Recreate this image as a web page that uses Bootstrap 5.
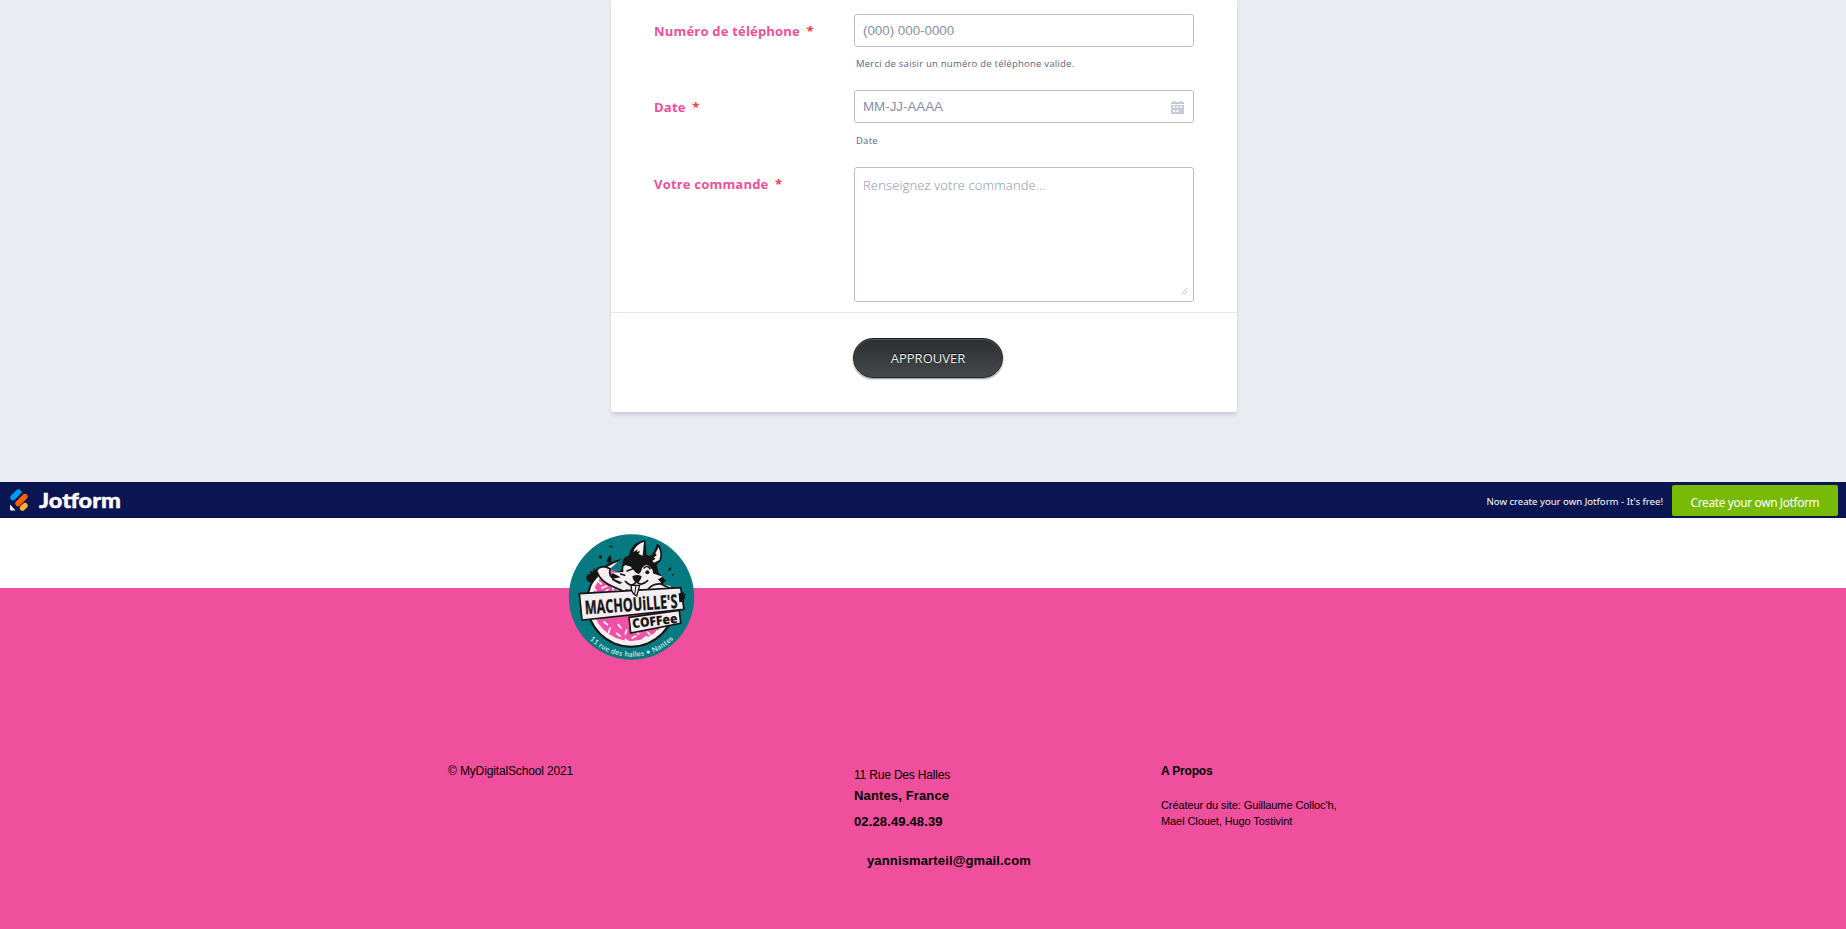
<!DOCTYPE html>
<html lang="fr">
<head>
<meta charset="utf-8">
<meta name="viewport" content="width=device-width, initial-scale=1">
<title>Machouille's Coffee</title>
<link href="https://cdn.jsdelivr.net/npm/bootstrap@5.3.0/dist/css/bootstrap.min.css" rel="stylesheet">
<style>
body{font-family:"Liberation Sans",Arial,sans-serif;color:#000;overflow:hidden}
.form-zone{background:#ebecf1;height:482px;padding-left:2px;font-family:"Open Sans",sans-serif}
.form-box{width:626px;height:412px;background:#fff;border-radius:0 0 3px 3px;box-shadow:0 4px 4px -1px #c8cbda,0 0 2px #d5d8e6}
.form-body{height:312px;padding:14px 43px 0}
.line-a{height:76px}.line-b{height:77px}
.form-title{width:200px;padding-top:8px;font-size:13px;line-height:18px;font-weight:700;letter-spacing:.2px;color:#ee4f9b;white-space:nowrap}
.form-title i{font-style:normal;color:#f23a3c;margin-left:3px}
.field{width:340px}
.field .form-control{border:1px solid #b8bdc9;border-radius:3px;font:13.33px/17px "Liberation Sans",Arial,sans-serif;padding:7px 8px;height:33px;min-height:0}
.field .form-control::placeholder{color:#8490a8;opacity:1}
.field textarea.form-control{height:135px;font:300 13px/18px "Open Sans",sans-serif;letter-spacing:.14px;padding-top:8px;resize:none}
.hint{font-size:9.5px;line-height:12px;letter-spacing:.23px;color:#57647e;margin:11px 0 0 2px}
.line-b .hint{margin-top:12px}
.over-cal{right:10px;top:11px}
.over-grip{right:6px;bottom:7px}
.form-foot{border-top:1px solid #e4e5ee;padding:25px 0 0 242px}
.send{width:150px;height:40px;border:1px solid #1f2224;border-radius:20px;background:linear-gradient(#2b2f31,#45494c);box-shadow:inset 0 1px 0 #515557,0 1px 2px #0007;color:#f0f0f0;font-size:13px;text-shadow:0 -1px 0 #000;padding:2px 0 0}
.jot{background:#0a1551;height:36px;padding:0 8px 0 9px;font-family:"Noto Sans",sans-serif}
.jot-text{font-size:9.6px;color:#fff;padding-top:5px}
.jot .btn{width:166px;height:31px;margin-left:9px;background:#78bb07;color:#fff;border:0;border-radius:2px;font-size:11.9px;letter-spacing:-.36px;padding:3px 0 0;line-height:18px}
.logo-zone{height:70px;background:#fff}
.foot{display:flow-root;height:341px;background:#ef4f9c;padding-left:448px}
.seal{margin:-54px 0 0 120px;display:block}
.foot-cols{padding-top:103px}
.foot p{margin:0;white-space:nowrap}
.c1{width:406px;font-size:12px;line-height:14px;letter-spacing:-.14px}
.c2{width:307px}.c3{width:200px}
.f11{font-size:12px;line-height:14px;letter-spacing:-.18px}
.f13{font-size:13px;line-height:15px;font-weight:700;letter-spacing:.14px}
.credit{font-size:11px;line-height:16px;margin-top:19px!important;letter-spacing:-.09px}
</style>
</head>
<body>
<main class="form-zone d-flex justify-content-center">
<form class="form-box">
<div class="form-body">
<div class="d-flex line-a"><label class="form-title">Numéro de téléphone <i>*</i></label><div class="field"><input class="form-control" placeholder="(000) 000-0000"><div class="hint">Merci de saisir un numéro de téléphone valide.</div></div></div>
<div class="d-flex line-b"><label class="form-title">Date <i>*</i></label><div class="field"><div class="position-relative"><input class="form-control" placeholder="MM-JJ-AAAA"><svg class="position-absolute over-cal" width="13" height="13" viewBox="0 0 13 13"><path fill="#c4c9db" fill-rule="evenodd" d="M0 1h2V0h2v1h5V0h2v1h2v2H0zM0 4h13v9H0zM2 5v2h2V5zm3.500 0v2h2V5zM9 5v2h2V5zM2 9v2h2V9zm3.500 0v2h2V9z"/></svg></div><div class="hint">Date</div></div></div>
<div class="d-flex"><label class="form-title">Votre commande <i>*</i></label><div class="field position-relative"><textarea class="form-control" placeholder="Renseignez votre commande..."></textarea><svg class="position-absolute over-grip" width="7" height="7" viewBox="0 0 7 7"><path stroke="#a9adba" stroke-width=".8" d="M.5 6.5l5-6M3.500 6.500l3-3.500"/></svg></div></div>
</div>
<div class="form-foot"><button type="button" class="send d-flex align-items-center justify-content-center">APPROUVER</button></div>
</form>
</main>
<nav class="jot d-flex align-items-center justify-content-between">
<svg width="114" height="28" viewBox="0 0 114 28"><g stroke-width="5.400" stroke-linecap="round"><path stroke="#0099ff" d="M4 11.500L9.500 6"/><path stroke="#ff6100" d="M9 17.500L16 10.500"/><path stroke="#ffb629" d="M13.500 22L16 19.500"/></g><path fill="#fff" d="M1 18.500v5q0 1 1 1h4.500z"/><text x="30" y="22" font-family="Lato" font-weight="900" font-size="21.500" fill="#fff" stroke="#fff" stroke-width=".4" textLength="82" lengthAdjust="spacingAndGlyphs">Jotform</text></svg>
<div class="d-flex align-items-center"><span class="jot-text">Now create your own Jotform - It's free!</span><button class="btn">Create your own Jotform</button></div>
</nav>
<div class="logo-zone"></div>
<footer class="foot">
<svg class="seal position-relative" width="127" height="127" viewBox="24 30 381 381">
<defs><path id="arc" d="M88 346A179 179 0 0 0 360 323"/></defs>
<circle cx="214.500" cy="219" r="188" fill="#067a80"/>
<!-- donut -->
<circle cx="213" cy="236" r="135" fill="#151515"/><circle cx="213" cy="236" r="129" fill="#f4eef0"/><circle cx="213" cy="234" r="117" fill="#f052a5"/>
<path stroke="#fff" stroke-width="5" stroke-linecap="round" d="M112 170l12 10M140 186l-14 6M132 205l12-8M108 200l-8-8M158 190l4 12M170 200l14-6M124 148l-4 12M132 294l10 8M150 312l-4 14M175 302l8 10M170 328l10 8M200 318l-4 12M216 342l12-6M236 330l-8-8M250 344l10-6M262 324l8 8M286 330l6-10M300 318l8-5M196 346l6 4"/>
<path fill="#067a80" d="M150 134L185 104 220 60 305 60 330 130 352 200 330 186 180 150Z"/>
<!-- left arm and paw -->
<path fill="#151515" d="M82 150l8 2 0-12 8 4 3-11 10 4 4 20-17 20-14-4-6-10z"/>
<path fill="#f4eef0" stroke="#151515" stroke-width="5" d="M110 142Q112 128 135 128L150 134Q144 158 164 164L208 176 196 204 160 188Q122 174 110 142Z"/>
<!-- head and ears -->
<path fill="#151515" d="M188 118Q186 100 206 95Q212 68 228 58Q242 50 256 47L260 92 270 96Q284 86 290 60L298 62Q312 88 302 112Q296 118 290 122L296 146 318 170 296 192H200L156 168 154 150 182 140Z"/>
<path fill="#f4eef0" d="M252 53l-4 42-12-5 4-9-10 3 3-8-13 8q6-22 32-31zM296 70q9 22 2 38l-16 8-5-6 10-6-6-3 9-8-4-5z"/>
<path fill="#f4eef0" d="M190 128Q202 114 217 132Q226 148 236 150Q244 146 246 132Q260 114 272 132Q282 140 278 148L308 158 294 166 304 178 278 186 264 196H192L178 180 188 176 160 164 182 160 156 146 190 144Z"/>
<path fill="none" stroke="#151515" stroke-width="5" stroke-linecap="round" d="M200 122q18 2 19 12l-18 7M252 132q10-10 18 2M196 172q22 22 33 0q12 18 34-2M229 164v10M182 150l12 4"/><circle cx="262" cy="145" r="6" fill="#151515"/>
<path fill="#151515" d="M217 157q14-8 28 0-4 18-14 18-11 0-14-18z"/>
<!-- right arm -->
<path fill="#f4eef0" stroke="#151515" stroke-width="5" d="M260 202Q274 178 302 180L342 198 328 205Z"/>
<path fill="#151515" d="M116 98q6-8 10 0 1 6-6 6zM147 66q12-2 12 4-8 4-12-4zM150 93q8 12 3 22-9 4-13-2 0-8 10-20zM322 136l14-7-6 12zM334 152l8-3-3 7z"/>
<!-- name plates -->
<path fill="#f4eef0" stroke="#151515" stroke-width="5" d="M58 209L362 191 372 256 66 288Z"/>
<path fill="#f4eef0" stroke="#151515" stroke-width="5" d="M207 280L358 259 362 298 212 327Z"/>
<path fill="#151515" d="M356 208l17-4-3 7 8 0-5 7 4 4-6 5 2 6-15 2z"/>
<path fill="#f4eef0" stroke="#151515" stroke-width="4" d="M213 184h26l-9 32-9-6-6-10z"/><path stroke="#151515" stroke-width="3" d="M228 184l-4 26"/>
<text transform="translate(76 271) rotate(-4)" font-family="Open Sans" font-weight="700" font-size="56" fill="#151515" stroke="#151515" textLength="278" lengthAdjust="spacingAndGlyphs">MACHOUiLLE'S</text>
<text transform="translate(218 313) rotate(-7)" font-family="Open Sans" font-weight="800" font-size="39" fill="#151515" textLength="137" lengthAdjust="spacingAndGlyphs">COFFee</text>
<text font-family="Lato" font-weight="700" font-size="22" fill="#b8e3e3" letter-spacing=".9"><textPath href="#arc" startOffset="1">11 rue des halles • Nantes</textPath></text>
</svg>
<div class="d-flex foot-cols">
<p class="c1">© MyDigitalSchool 2021</p>
<address class="c2 m-0"><p class="f11 pt-1">11 Rue Des Halles</p><p class="f13" style="margin-top:6px">Nantes, France</p><p class="f13" style="margin-top:11px">02.28.49.48.39</p><p class="f13" style="margin:24px 0 0 13px">yannismarteil@gmail.com</p></address>
<section class="c3"><p class="f11 fw-bold">A Propos</p><p class="credit">Créateur du site: Guillaume Colloc'h,<br>Mael Clouet, Hugo Tostivint</p></section>
</div>
</footer>
<script src="https://cdn.jsdelivr.net/npm/bootstrap@5.3.0/dist/js/bootstrap.bundle.min.js"></script>
</body>
</html>
